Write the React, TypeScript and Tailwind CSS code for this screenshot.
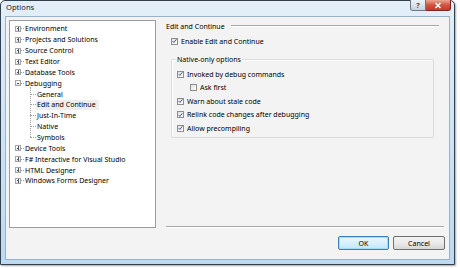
import React from 'react';

const FONT = { fontFamily: '"Noto Sans", "Open Sans", sans-serif' };

const ROOTS_TOP = ['Environment', 'Projects and Solutions', 'Source Control', 'Text Editor', 'Database Tools'];
const CHILDREN = ['General', 'Edit and Continue', 'Just-In-Time', 'Native', 'Symbols'];
const ROOTS_BOTTOM = ['Device Tools', 'F# Interactive for Visual Studio', 'HTML Designer', 'Windows Forms Designer'];

function ExpandBox({ open }: { open?: boolean }) {
  return (
    <div className="relative w-[6px] h-[6px] border border-[#a5a5a5] bg-gradient-to-b from-white to-[#e2e2e2] shrink-0">
      <div className="absolute left-[1px] right-[1px] top-[1.5px] h-[1px] bg-[#4b5b6e]" />
      {!open && <div className="absolute top-[0px] bottom-[0px] left-[1.5px] w-[1px] bg-[#4b5b6e]" />}
    </div>
  );
}

function RootRow({ label, open }: { label: string; open?: boolean }) {
  return (
    <div className="h-[10.86px] flex items-center pl-[5px]">
      <ExpandBox open={open} />
      <div className="w-[3px] border-t border-dotted border-[#a0a0a0] shrink-0" />
      <span className="pl-[1px] leading-none whitespace-nowrap">{label}</span>
    </div>
  );
}

function Check({ checked }: { checked?: boolean }) {
  return (
    <div className="w-[7px] h-[7px] border border-[#8e8f8f] bg-gradient-to-br from-[#e0e0e0] to-white flex items-center justify-center shrink-0">
      {checked && (
        <svg width="6" height="6" viewBox="0 0 6 6">
          <path d="M0.8 3.1 L2.3 4.7 L5.3 0.9" fill="none" stroke="#3b4f86" strokeWidth="1.1" />
        </svg>
      )}
    </div>
  );
}

function CheckRow({ label, checked, className = '' }: { label: string; checked?: boolean; className?: string }) {
  return (
    <div className={`flex items-center gap-[3px] h-[10px] ${className}`}>
      <Check checked={checked} />
      <span className="leading-none whitespace-nowrap">{label}</span>
    </div>
  );
}

export default function App() {
  return (
    <div className="w-[460px] h-[268px] bg-white overflow-hidden text-[7px] text-black" style={FONT}>
      <div className="w-[455px] h-[265px] rounded-t-[5px] border border-[#33414e] bg-gradient-to-b from-[#e4eff8] via-[#cfe3f3] to-[#bcdaf1] flex flex-col px-[4px] pb-[4px] shadow-[1px_1px_2px_rgba(0,0,0,0.35)]">
        {/* title bar */}
        <div className="h-[15px] flex justify-between shrink-0">
          <span className="pt-[3px] pl-[1px] text-[7.6px] leading-none text-[#1b1b1b]">Options</span>
          <div className="flex h-[11px] -mt-[1px] mr-[-1px]">
            <div className="w-[16px] rounded-bl-[3px] border border-[#6d7a88] border-t-0 bg-gradient-to-b from-[#eef3f8] to-[#c7d3df] flex items-center justify-center text-[7px] leading-none text-[#3d4a58] font-bold">?</div>
            <div className="w-[25px] rounded-br-[3px] border border-[#7a2a20] border-t-0 border-l-0 bg-gradient-to-b from-[#e8a594] via-[#d0553f] to-[#c43b22] flex items-center justify-center">
              <svg width="8" height="7" viewBox="0 0 8 7">
                <path d="M1.5 1 L6.5 6 M6.5 1 L1.5 6" stroke="white" strokeWidth="1.6" />
              </svg>
            </div>
          </div>
        </div>

        {/* client area */}
        <div className="flex-1 bg-[#f3f3f3] border border-[#9bb2c7] flex flex-col">
          <div className="flex pt-[3px] pl-[3px] pr-[5px]">
            {/* tree */}
            <div className="w-[147px] h-[208px] shrink-0 bg-white border border-[#9c9c9c] pt-[2.5px]">
              {ROOTS_TOP.map((r) => (
                <RootRow key={r} label={r} />
              ))}
              <RootRow label="Debugging" open />
              <div className="relative">
                <div className="absolute left-[20px] top-[-2px] h-[50px] border-l border-dotted border-[#a0a0a0]" />
                {CHILDREN.map((c) => (
                  <div key={c} className="h-[10.86px] flex items-center pl-[20px]">
                    <div className="w-[6px] border-t border-dotted border-[#a0a0a0] shrink-0" />
                    <span
                      className={`px-[1px] leading-none whitespace-nowrap h-[10px] flex items-center ${
                        c === 'Edit and Continue' ? 'bg-[#eeeeee] pr-[3px]' : ''
                      }`}
                    >
                      {c}
                    </span>
                  </div>
                ))}
              </div>
              {ROOTS_BOTTOM.map((r) => (
                <RootRow key={r} label={r} />
              ))}
            </div>

            {/* right panel */}
            <div className="flex-1 ml-[10px] flex flex-col h-[208px]">
              <div className="flex items-center h-[10px] mt-[1px]">
                <span className="leading-none whitespace-nowrap">Edit and Continue</span>
                <div className="flex-1 ml-[6px] mr-[5px] h-[2px] border-t border-[#a7a7a7] border-b-white border-b" />
              </div>
              <CheckRow className="mt-[5px] ml-[5px]" label="Enable Edit and Continue" checked />

              <div className="relative mt-[13px] ml-[5px] mr-[10px] h-[79px] border border-[#dcdcdc] rounded-[2px] shadow-[inset_1px_1px_0_white]">
                <span className="absolute left-[4px] top-[-5px] px-[1px] bg-[#f3f3f3] leading-none h-[9px] flex items-center">Native-only options</span>
                <div className="flex flex-col gap-[3.5px] pt-[9px] pl-[5px]">
                  <CheckRow label="Invoked by debug commands" checked />
                  <CheckRow className="ml-[13px]" label="Ask first" />
                  <CheckRow label="Warn about stale code" checked />
                  <CheckRow label="Relink code changes after debugging" checked />
                  <CheckRow label="Allow precompiling" checked />
                </div>
              </div>

              <div className="mt-auto h-[2px] border-t border-[#a7a7a7] border-b border-b-white" />
            </div>
          </div>

          {/* footer */}
          <div className="flex justify-end gap-[4px] pr-[4px] pt-[8px]">
            <button className="w-[51px] h-[14px] rounded-[2px] border border-[#3c7fb1] bg-gradient-to-b from-[#eaf6fd] via-[#d9f0fc] to-[#bee6fd] shadow-[inset_0_0_0_1px_#a7d9f5] text-[7px] leading-none">
              OK
            </button>
            <button className="w-[52px] h-[14px] rounded-[2px] border border-[#707070] bg-gradient-to-b from-[#f2f2f2] via-[#ebebeb] to-[#d5d5d5] text-[7px] leading-none">
              Cancel
            </button>
          </div>
        </div>
      </div>
    </div>
  );
}
